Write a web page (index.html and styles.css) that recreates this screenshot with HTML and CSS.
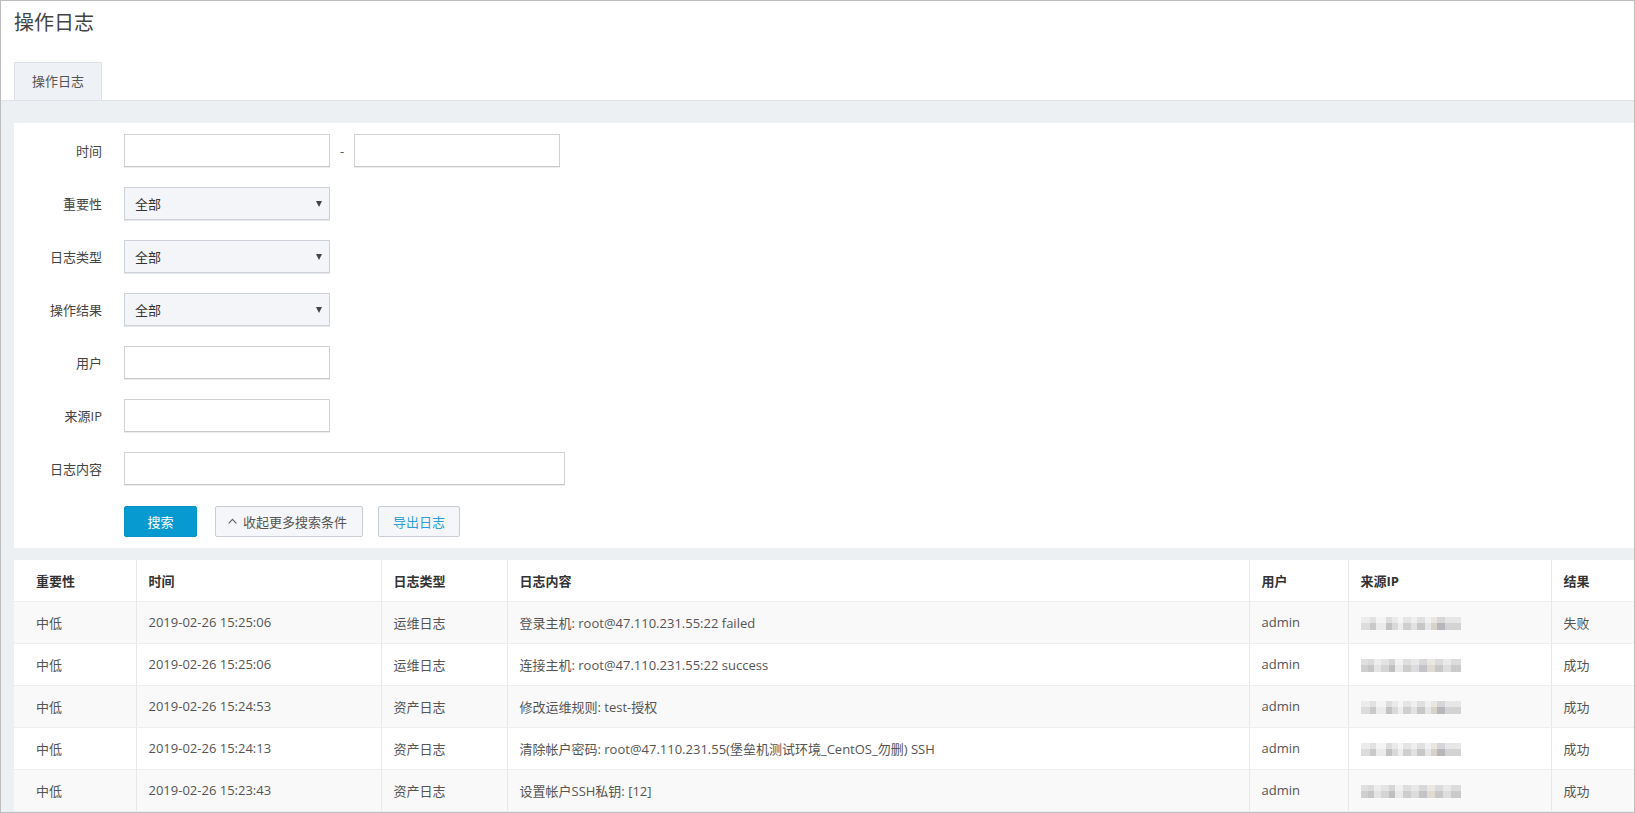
FILE: index.html
```html
<!DOCTYPE html>
<html lang="zh-CN">
<head>
<meta charset="utf-8">
<title>操作日志</title>
<link rel="stylesheet" href="styles.css">
</head>
<body>
<div class="page">
  <header class="page-head">
    <h1 class="page-title">操作日志</h1>
    <nav class="tabs">
      <span class="tab tab-active">操作日志</span>
    </nav>
  </header>

  <main class="content">
    <section class="filter-panel">
      <form class="filter-form">
        <div class="form-row">
          <label class="form-label">时间</label>
          <div class="form-control">
            <input class="text-input" type="text">
            <span class="range-sep">-</span>
            <input class="text-input" type="text">
          </div>
        </div>
        <div class="form-row">
          <label class="form-label">重要性</label>
          <div class="select-wrap">
            <select class="select-input"><option>全部</option></select>
            <span class="select-arrow"></span>
          </div>
        </div>
        <div class="form-row">
          <label class="form-label">日志类型</label>
          <div class="select-wrap">
            <select class="select-input"><option>全部</option></select>
            <span class="select-arrow"></span>
          </div>
        </div>
        <div class="form-row">
          <label class="form-label">操作结果</label>
          <div class="select-wrap">
            <select class="select-input"><option>全部</option></select>
            <span class="select-arrow"></span>
          </div>
        </div>
        <div class="form-row">
          <label class="form-label">用户</label>
          <input class="text-input" type="text">
        </div>
        <div class="form-row">
          <label class="form-label">来源IP</label>
          <input class="text-input" type="text">
        </div>
        <div class="form-row">
          <label class="form-label">日志内容</label>
          <input class="text-input text-input-wide" type="text">
        </div>
        <div class="form-row form-actions">
          <span class="form-label"></span>
          <button type="button" class="btn btn-primary">搜索</button>
          <button type="button" class="btn btn-default btn-collapse">
            <svg class="chev" width="9" height="6" viewBox="0 0 9 6"><polyline points="0.7,5.3 4.5,1.3 8.3,5.3" fill="none" stroke="#666" stroke-width="1.2"/></svg>
            收起更多搜索条件
          </button>
          <button type="button" class="btn btn-default btn-export">导出日志</button>
        </div>
      </form>
    </section>

    <section class="table-panel">
      <table class="log-table">
        <colgroup>
          <col class="c-level"><col class="c-time"><col class="c-type"><col class="c-content"><col class="c-user"><col class="c-ip"><col class="c-result">
        </colgroup>
        <thead>
          <tr>
            <th>重要性</th><th>时间</th><th>日志类型</th><th>日志内容</th><th>用户</th><th>来源IP</th><th>结果</th>
          </tr>
        </thead>
        <tbody>
          <tr>
            <td>中低</td><td>2019-02-26 15:25:06</td><td>运维日志</td><td>登录主机: root@47.110.231.55:22 failed</td><td>admin</td><td><span class="ip-mask ip-a"></span></td><td>失败</td>
          </tr>
          <tr>
            <td>中低</td><td>2019-02-26 15:25:06</td><td>运维日志</td><td>连接主机: root@47.110.231.55:22 success</td><td>admin</td><td><span class="ip-mask ip-b"></span></td><td>成功</td>
          </tr>
          <tr>
            <td>中低</td><td>2019-02-26 15:24:53</td><td>资产日志</td><td>修改运维规则: test-授权</td><td>admin</td><td><span class="ip-mask ip-a"></span></td><td>成功</td>
          </tr>
          <tr>
            <td>中低</td><td>2019-02-26 15:24:13</td><td>资产日志</td><td>清除帐户密码: root@47.110.231.55(堡垒机测试环境_CentOS_勿删) SSH</td><td>admin</td><td><span class="ip-mask ip-a"></span></td><td>成功</td>
          </tr>
          <tr>
            <td>中低</td><td>2019-02-26 15:23:43</td><td>资产日志</td><td>设置帐户SSH私钥: [12]</td><td>admin</td><td><span class="ip-mask ip-b"></span></td><td>成功</td>
          </tr>
        </tbody>
      </table>
    </section>
  </main>
</div>
</body>
</html>
```

FILE: styles.css
```css
* { box-sizing: border-box; }

html, body {
  margin: 0;
  padding: 0;
  background: #fff;
}

body {
  font-family: "Open Sans", "Noto Sans CJK SC", sans-serif;
  font-size: 13px;
  color: #555;
}

.page {
  width: 1635px;
  height: 813px;
  border: 1px solid #bdbdbd;
  overflow: hidden;
  display: flex;
  flex-direction: column;
  background: #edf0f3;
}

/* header */
.page-head {
  background: #fff;
  padding: 11px 13px 0;
  border-bottom: 1px solid #dfe4ea;
}

.page-title {
  margin: 0;
  font-size: 20px;
  line-height: 22px;
  font-weight: normal;
  color: #444;
}

.tabs {
  display: flex;
  margin-top: 28px;
}

.tab {
  height: 38px;
  line-height: 37px;
  padding: 0 17px;
  font-size: 13px;
  color: #555;
  background: #eef1f5;
  border: 1px solid #dde2e8;
  border-bottom: none;
}

/* content */
.content {
  flex: 1;
  padding: 22px 0 0 13px;
  display: flex;
  flex-direction: column;
  gap: 12px;
}

.filter-panel {
  background: #fff;
  padding: 11px 0 11px;
}

.filter-form {
  display: flex;
  flex-direction: column;
  gap: 20px;
}

.form-row {
  display: flex;
  align-items: center;
  height: 33px;
}

.form-actions {
  margin-top: 1px;
  height: 31px;
}

.form-label {
  width: 88px;
  margin-right: 22px;
  text-align: right;
  font-size: 13px;
  color: #444;
  flex: none;
}

.form-control {
  display: flex;
  align-items: center;
}

.text-input {
  width: 206px;
  height: 33px;
  border: 1px solid #d2d2d2;
  border-bottom-color: #c8c8c8;
  box-shadow: 0 1px 0 #ececec;
  background: #fff;
  padding: 0 10px;
  font: inherit;
  outline: none;
  border-radius: 0;
}

.text-input-wide {
  width: 441px;
}

.range-sep {
  width: 24px;
  text-align: center;
  color: #555;
}

.select-wrap {
  position: relative;
  width: 206px;
  height: 33px;
}

.select-input {
  -webkit-appearance: none;
  appearance: none;
  width: 100%;
  height: 100%;
  border: 1px solid #cdd2da;
  box-shadow: 0 1px 0 #e6e8ec;
  background: #f4f5f9;
  padding: 0 10px;
  font: inherit;
  font-size: 13px;
  color: #333;
  border-radius: 0;
  outline: none;
}

.select-arrow {
  position: absolute;
  right: 8px;
  top: 14px;
  width: 0;
  height: 0;
  border-left: 3.5px solid transparent;
  border-right: 3.5px solid transparent;
  border-top: 6px solid #444;
  pointer-events: none;
}

.btn {
  height: 31px;
  display: inline-flex;
  align-items: center;
  justify-content: center;
  font: inherit;
  font-size: 13px;
  border-radius: 2px;
  cursor: pointer;
  padding: 0;
}

.btn-primary {
  width: 73px;
  background: #079ad0;
  border: 1px solid #0892c6;
  color: #fff;
}

.btn-default {
  background: #f5f6f9;
  border: 1px solid #c8ccd3;
  color: #555;
}

.btn-collapse {
  width: 148px;
  margin-left: 18px;
  justify-content: flex-start;
  padding-left: 12px;
}

.chev {
  margin-right: 6px;
  margin-top: -1px;
}

.btn-export {
  width: 82px;
  margin-left: 15px;
  color: #2b9ed6;
}

/* table */
.table-panel {
  flex: 1;
  background: #fff;
}

.log-table {
  width: 100%;
  border-collapse: collapse;
  table-layout: fixed;
}

.c-level { width: 122px; }
.c-time { width: 245px; }
.c-type { width: 126px; }
.c-content { width: 742px; }
.c-user { width: 99px; }
.c-ip { width: 203px; }
.c-result { width: auto; }

.log-table th,
.log-table td {
  text-align: left;
  padding: 0 12px;
  border-left: 1px solid #e8e8e8;
  border-bottom: 1px solid #eeeeee;
  white-space: nowrap;
  overflow: hidden;
}

.log-table th:first-child,
.log-table td:first-child {
  border-left: none;
  padding-left: 22px;
}

.log-table th {
  height: 41px;
  font-weight: bold;
  color: #333;
  background: #fff;
}

.log-table td {
  height: 42px;
  color: #555;
}

.log-table tbody tr:nth-child(odd) td {
  background: #f9f9f9;
}

.ip-mask {
  display: inline-block;
  width: 100px;
  height: 13px;
  vertical-align: middle;
}

.ip-a {
  background:
    linear-gradient(to bottom, rgba(255,255,255,0.45) 0 6px, rgba(0,0,0,0) 6px 13px),
    linear-gradient(to right, #dcdcdc 0 9px, #c9c9c9 9px 15px, #ebebeb 15px 25px, #c2c2c2 25px 31px, #d9d9d9 31px 37px, #ededed 37px 42px, #cfcfcf 42px 50px, #e2e2e2 50px 56px, #c7c7c7 56px 64px, #e6e6e6 64px 70px, #d8d2ca 70px 76px, #b6b6bb 76px 84px, #d3d3d3 84px 100px);
}

.ip-b {
  background:
    linear-gradient(to bottom, rgba(255,255,255,0.35) 0 6px, rgba(0,0,0,0) 6px 13px),
    linear-gradient(to right, #cfcfcf 0 7px, #c6c6c6 7px 13px, #e4e4e4 13px 20px, #d4d4d4 20px 28px, #bfbfbf 28px 34px, #e9e9e9 34px 42px, #cdcdcd 42px 50px, #dcdcdc 50px 58px, #c3c3c8 58px 66px, #e0dad2 66px 74px, #c8c8c8 74px 82px, #dedede 82px 90px, #cacaca 90px 100px);
}
```
